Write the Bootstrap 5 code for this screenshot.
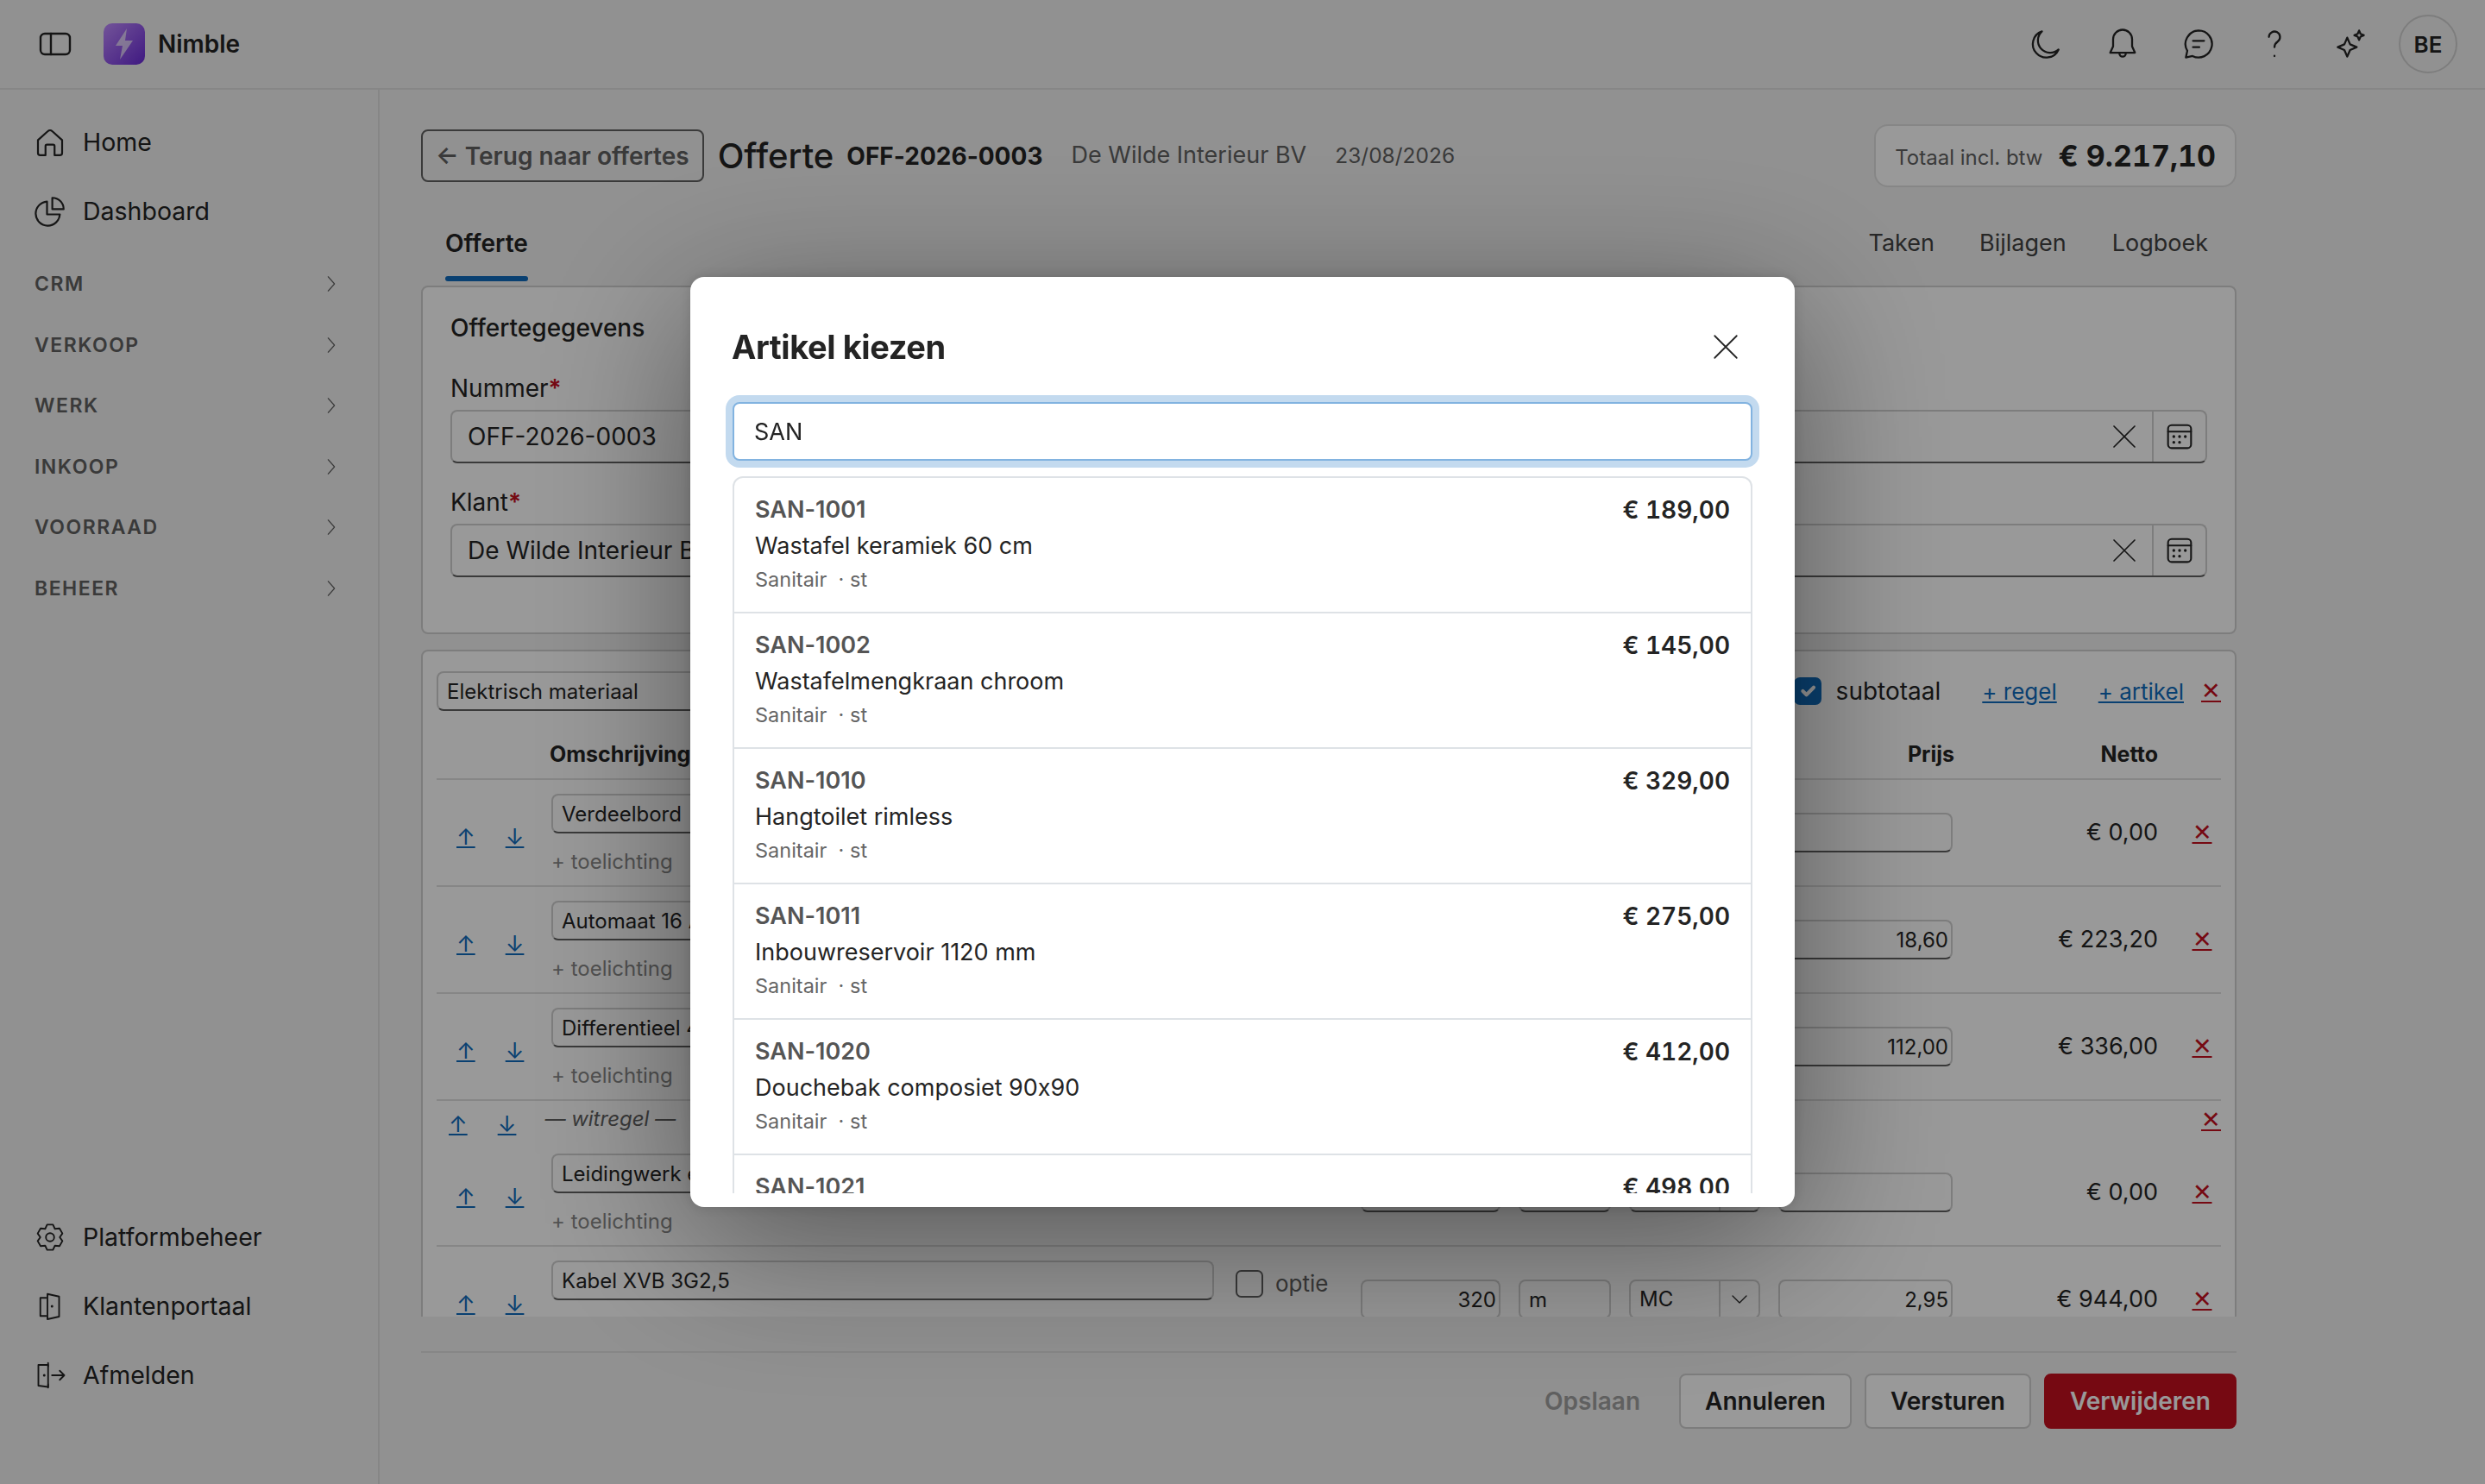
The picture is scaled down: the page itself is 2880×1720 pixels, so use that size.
<!DOCTYPE html>
<html lang="nl">
<head>
  <meta charset="UTF-8" />
  <meta name="viewport" content="width=device-width, initial-scale=1.0"/>
  <title>Nimble - Offerte</title>
  <link href="https://cdn.jsdelivr.net/npm/bootstrap@5.3.3/dist/css/bootstrap.min.css" rel="stylesheet">
  <style>
    :root {
      --ink: #242424;
      --ink-2: #616161;
      --line: #d1d1d1;
      --line-2: #e0e0e0;
      --brand: #0f6cbd;
      --danger-ink: #c50f1f;
    }
    body {
      font-family: Inter, "Liberation Sans", sans-serif;
      font-feature-settings: "calt" 0;
      font-size: 28px;
      color: var(--ink);
      background: #f2f2f2;
      height: 1720px;
      overflow: hidden;
    }
    svg.ico { fill: none; stroke: currentColor; stroke-width: 1.25; stroke-linecap: round; stroke-linejoin: round; flex: none; }

    .topbar { height: 104px; border-bottom: 2px solid var(--line-2); padding: 0 32px 0 45px; }
    .brand-mark { width: 48px; height: 48px; border-radius: 10px; background: linear-gradient(135deg, #c08cff, #6a2ad8); margin-left: 37px; }
    .brand-name { font-weight: 600; font-size: 28px; margin-left: 15px; }
    .top-icon { width: 88px; display: flex; justify-content: center; }
    .avatar { width: 68px; height: 68px; border: 2px solid var(--line); border-radius: 50%; font-weight: 600; font-size: 26px; margin-left: 12px; }

    .app-body { height: 1616px; }
    .side { width: 440px; border-right: 2px solid var(--line-2); padding: 21px 0 86px 0; flex: none; }
    .side-link { height: 80px; padding-left: 37px; gap: 17px; color: var(--ink); font-size: 28.500px; }
    .side-group { height: 70.5px; padding: 0 48px 0 40px; font-size: 23px; font-weight: 600; letter-spacing: 1.5px; color: var(--ink-2); }
    .side-first { margin-top: 9px; }

    .work { padding: 40px 0 0 48px; width: 2152px; }
    .back-btn { height: 61px; border: 2px solid var(--ink-2); border-radius: 8px; padding: 0 15px; font-size: 28px; font-weight: 600; color: var(--ink-2); background: transparent; }
    .doc-title { font-size: 40px; font-weight: 500; margin: 0 15px 0 16px; }
    .doc-num { font-size: 28px; font-weight: 700; margin-right: 33px; }
    .doc-client { font-size: 27px; color: var(--ink-2); margin-right: 33px; }
    .doc-date { font-size: 24.500px; color: var(--ink-2); }
    .total-box { height: 73px; border: 2px solid var(--line-2); border-radius: 16px; background: #fff; padding: 0 22px; gap: 18px; }
    .total-label { font-size: 24px; color: var(--ink-2); padding-top: 4px; }
    .total-val { font-size: 34px; font-weight: 700; font-variant-numeric: tabular-nums; }

    .tabs-row { height: 114px; }
    .tab-on { margin-left: 28px; height: 109px; padding-top: 44px; font-weight: 600; position: relative; }
    .tab-on::after { content: ""; position: absolute; left: 0; right: 0; bottom: 0; height: 6px; border-radius: 3px; background: var(--brand); }
    .tab-off { color: #424242; margin-top: 45px; font-size: 27px; }

    .pane { background: #fff; border: 2px solid var(--line); border-radius: 8px; }
    .pane-head { padding: 32px 32px 64px; height: 404px; }
    .pane-title { font-size: 28px; font-weight: 500; line-height: 30px; margin-bottom: 38px; }
    .lbl { line-height: 34px; margin-bottom: 8px; }
    .lbl b { color: var(--danger-ink); font-weight: 600; }
    .fld { height: 46px; font-size: 24px; color: var(--ink); border: 2px solid var(--line); border-bottom-color: var(--ink-2); border-radius: 8px; padding: 0 10px; background: #fff; box-shadow: none; }
    .fld-big { height: 62px; font-size: 28px; padding: 0 18px; margin-bottom: 28px; }
    .combo { height: 62px; border: 2px solid var(--line); border-bottom-color: var(--ink-2); border-radius: 8px; margin-bottom: 28px; }
    .combo-x { margin-right: 16px; }
    .combo-cal { width: 62px; height: 100%; border-left: 2px solid var(--line); }

    .clip-pane { height: 773px; margin-top: 18px; overflow: hidden; }
    .pane-lines { padding: 22px 16px 0; height: 900px; border-radius: 8px 8px 0 0; }
    .group-top { height: 48px; font-size: 28px; }
    .group-name { width: 860px; }
    .ck { width: 32px; height: 32px; border: 2px solid var(--ink-2); border-radius: 6px; margin: 0; flex: none; }
    .ck:checked { background-color: var(--brand); border-color: var(--brand); }
    .lnk { color: var(--brand); font-size: 26px; }
    .lnk-red { color: var(--danger-ink); font-size: 27px; }
    .regel { display: grid; grid-template-columns: 112px 768px 128px 162px 107px 152px 202px 217px 52px; column-gap: 21px; align-items: center; border-bottom: 2px solid var(--line-2); font-size: 24px; height: 124px; }
    .regel-head { height: 79px; font-size: 25px; font-weight: 700; align-items: end; padding-bottom: 9px; }
    .head-desc { margin-left: -2px; }
    .head-price { margin-right: -2px; }
    .regel-wit { display: flex; height: 45px; border-bottom: 0; font-size: 24px; }
    .arrows { display: flex; gap: 35px; padding-left: 23px; padding-top: 8px; }
    .desc-cell { align-self: start; padding-top: 16px; }
    .desc-cell .hint { color: var(--ink-2); opacity: .75; margin-top: 18px; line-height: 30px; }
    .opt-cell { align-self: start; padding: 23px 0 0 4px; gap: 14px; font-size: 26px; color: var(--ink-2); }
    .num { text-align: right; padding-right: 3px; }
    .netto { text-align: right; font-size: 27px; color: var(--ink); }
    .cross { text-align: center; padding-left: 8px; }
    .sel-box { height: 46px; border: 2px solid var(--line); border-bottom-color: var(--ink-2); border-radius: 8px; }
    .sel-box span { padding-left: 10px; flex: 1; }
    .sel-arrow { width: 46px; height: 100%; border-left: 2px solid var(--line); }
    .witregel-txt { color: var(--ink-2); font-style: italic; margin-left: 12px; margin-top: -3px; width: 1904px; }

    .foot-bar { margin-top: 40px; border-top: 2px solid var(--line-2); padding-top: 24px; gap: 15px; }
    .foot-btn { height: 64px; border: 2px solid var(--line); border-radius: 8px; background: #fff; font-size: 28px; font-weight: 600; color: var(--ink); padding: 0 28px; }
    .foot-ghost { color: #a0a0a0; border-color: transparent; background: transparent; }
    .foot-red { background: #c50f1f; border-color: #c50f1f; color: #fff; }

    .modal-backdrop { --bs-backdrop-opacity: .4; }
    .pick-modal .modal-dialog { max-width: 1280px; }
    .pick-box { height: 1078px; border: 0; border-radius: 16px; box-shadow: 0 0 16px rgba(0,0,0,.15), 0 40px 180px rgba(0,0,0,.45); padding: 0 48px 16px; }
    .pick-head { height: 145px; padding-top: 16px; }
    .pick-title { font-size: 38px; font-weight: 700; color: var(--ink); letter-spacing: -.4px; margin: 0; line-height: 1; }
    .pick-close { margin-right: 15px; color: var(--ink); }
    .pick-search { height: 68px; margin: 0 1px; width: auto; border: 2px solid #82b3e0; border-radius: 8px; box-shadow: 0 0 0 8px #c3daef; font-size: 27px; padding: 1px 23px 0; flex: none; color: var(--ink); }
    .pick-search:focus { border-color: #82b3e0; box-shadow: 0 0 0 8px #c3daef; }
    .pick-scroll { flex: 1; min-height: 0; overflow: hidden; margin: 18px 1px 0; }
    .pick-list { --bs-list-group-border-width: 2px; --bs-list-group-border-color: #dee2e6; --bs-list-group-border-radius: 12px; }
    .pick-item { padding: 17px 24px 20px 24px; line-height: 40px; font-size: 27px; color: var(--ink); }
    .pick-code { font-size: 27px; font-weight: 600; color: #555; }
    .pick-price { font-size: 28px; font-weight: 600; font-variant-numeric: tabular-nums; }
    .pick-name { line-height: 44px; }
    .pick-meta { font-size: 23.500px; line-height: 34px; color: #666; }
  </style>
</head>
<body>

<svg width="0" height="0" class="d-block">
  <symbol id="cal" viewBox="0 0 24 24"><rect x="4" y="4" width="16" height="16" rx="2.500"/><path d="M4 8.500h16"/><path d="M8 12h.01M12 12h.01M16 12h.01M8 16h.01M12 16h.01" stroke-width="2"/></symbol>
  <symbol id="chev" viewBox="0 0 12 24"><path d="M2 3l8 9-8 9"/></symbol>
  <symbol id="ex" viewBox="0 0 24 24"><path d="M3 3l18 18M21 3L3 21"/></symbol>
</svg>

<header class="topbar d-flex align-items-center">
  <svg class="ico" width="38" height="30" viewBox="0 0 38 30" style="stroke-width:2.400"><rect x="2" y="3" width="34" height="24" rx="5"/><path d="M14 3v24"/></svg>
  <span class="brand-mark d-flex align-items-center justify-content-center">
    <svg width="26" height="38" viewBox="0 0 26 38"><path d="M16 1L3 21h8l-3 16 15-22h-9z" fill="#fff" fill-opacity=".65"/></svg>
  </span>
  <span class="brand-name">Nimble</span>
  <div class="ms-auto d-flex align-items-center">
    <span class="top-icon"><svg class="ico" width="44" height="44" viewBox="0 0 24 24"><path d="M19.500 15.500A8.500 8.500 0 1 1 9 4a7.500 7.500 0 0 0 10.500 11.500z"/></svg></span>
    <span class="top-icon"><svg class="ico" width="44" height="44" viewBox="0 0 24 24"><path d="M12 3a6 6 0 0 0-6 6v4.500L4.200 17.500h15.600L18 13.500V9a6 6 0 0 0-6-6z"/><path d="M10 18a2 2 0 0 0 4 0"/></svg></span>
    <span class="top-icon"><svg class="ico" width="44" height="44" viewBox="0 0 24 24"><path d="M12 3.500a8.500 8.500 0 1 1-3.800 16.100L4 20.500l.9-4.200A8.500 8.500 0 0 1 12 3.500z"/><path d="M8.500 10h7M8.500 14h4"/></svg></span>
    <span class="top-icon"><svg class="ico" width="44" height="44" viewBox="0 0 24 24"><path d="M8.500 7.500a3.500 3.500 0 1 1 5.500 3c-1.300.9-2 1.700-2 3.500M12 19.500v.2"/></svg></span>
    <span class="top-icon"><svg class="ico" width="44" height="44" viewBox="0 0 24 24"><path d="M10 8l1.800 4.200L16 14l-4.200 1.800L10 20l-1.800-4.200L4 14l4.200-1.800z"/><path d="M17.500 3.500l.9 2.100 2.100.9-2.100.9-.9 2.100-.9-2.100-2.100-.9 2.100-.9z"/></svg></span>
    <span class="avatar d-flex align-items-center justify-content-center">BE</span>
  </div>
</header>

<div class="app-body d-flex">
  <aside class="side d-flex flex-column">
    <a class="side-link d-flex align-items-center text-decoration-none" href="#"><svg class="ico" width="42" height="42" viewBox="0 0 24 24"><path d="M4 10.500 10.600 4.600a2 2 0 0 1 2.800 0L20 10.500V19a1.500 1.500 0 0 1-1.500 1.500H15v-6a1 1 0 0 0-1-1h-4a1 1 0 0 0-1 1v6H5.500A1.500 1.500 0 0 1 4 19z"/></svg>Home</a>
    <a class="side-link d-flex align-items-center text-decoration-none" href="#"><svg class="ico" width="42" height="42" viewBox="0 0 24 24"><path d="M10 5.500a8 8 0 1 0 8.500 8.500H10z"/><path d="M13.500 3a7.500 7.500 0 0 1 7.500 7.500h-7.500z"/></svg>Dashboard</a>
    <div class="side-group side-first d-flex align-items-center justify-content-between">CRM<svg class="ico" width="12" height="22"><use href="#chev"/></svg></div>
    <div class="side-group d-flex align-items-center justify-content-between">VERKOOP<svg class="ico" width="12" height="22"><use href="#chev"/></svg></div>
    <div class="side-group d-flex align-items-center justify-content-between">WERK<svg class="ico" width="12" height="22"><use href="#chev"/></svg></div>
    <div class="side-group d-flex align-items-center justify-content-between">INKOOP<svg class="ico" width="12" height="22"><use href="#chev"/></svg></div>
    <div class="side-group d-flex align-items-center justify-content-between">VOORRAAD<svg class="ico" width="12" height="22"><use href="#chev"/></svg></div>
    <div class="side-group d-flex align-items-center justify-content-between">BEHEER<svg class="ico" width="12" height="22"><use href="#chev"/></svg></div>
    <a class="side-link d-flex align-items-center text-decoration-none mt-auto" href="#"><svg class="ico" width="42" height="42" viewBox="0 0 28 28"><g transform="translate(2 2)"><path d="M9.750 2.260h4.500L15.750 5.500 19.310 5.180 21.560 9.080 19.500 12l2.060 2.920-2.250 3.900-3.560-.32-1.500 3.240h-4.500L8.250 18.500l-3.560.32-2.250-3.900L4.500 12 2.440 9.080l2.250-3.900 3.560.32z"/><circle cx="12" cy="12" r="3.200"/></g></svg>Platformbeheer</a>
    <a class="side-link d-flex align-items-center text-decoration-none" href="#"><svg class="ico" width="42" height="42" viewBox="0 0 28 28"><g transform="translate(2 2)"><path d="M9 5.500H4.500v14H9"/><path d="M10 2.500l9 2v15.500l-9 2z"/><path d="M13.500 12h.01" stroke-width="2"/></g></svg>Klantenportaal</a>
    <a class="side-link d-flex align-items-center text-decoration-none" href="#"><svg class="ico" width="42" height="42" viewBox="0 0 28 28"><g transform="translate(2 2)"><path d="M10.500 4H3v16l7.500 1z"/><path d="M10.500 2.500V5M10.500 19v2.500"/><path d="M13.500 12H23M19.500 8.500 23 12l-3.500 3.500"/><path d="M7.500 12h.01" stroke-width="2"/></g></svg>Afmelden</a>
  </aside>

  <main class="work d-flex flex-column">
    <div class="d-flex align-items-center">
      <button class="back-btn">← Terug naar offertes</button>
      <h1 class="doc-title mb-0">Offerte</h1>
      <span class="doc-num">OFF-2026-0003</span>
      <span class="doc-client">De Wilde Interieur BV</span>
      <span class="doc-date">23/08/2026</span>
      <div class="total-box d-flex align-items-center ms-auto">
        <span class="total-label">Totaal incl. btw</span>
        <span class="total-val">€ 9.217,10</span>
      </div>
    </div>

    <div class="tabs-row d-flex align-items-start">
      <div class="tab-on">Offerte</div>
      <div class="tab-off ms-auto">Taken</div>
      <div class="tab-off" style="margin-left:52px">Bijlagen</div>
      <div class="tab-off" style="margin-left:53px;margin-right:33px">Logboek</div>
    </div>

    <section class="pane pane-head">
      <div class="pane-title">Offertegegevens</div>
      <div class="row g-4">
        <div class="col-6">
          <div class="lbl">Nummer<b>*</b></div>
          <input class="form-control fld fld-big" value="OFF-2026-0003">
          <div class="lbl">Klant<b>*</b></div>
          <input class="form-control fld fld-big" value="De Wilde Interieur BV">
        </div>
        <div class="col-6">
          <div class="lbl">Datum</div>
          <div class="combo d-flex align-items-center justify-content-end">
            <svg class="ico combo-x" width="32" height="32"><use href="#ex"/></svg>
            <span class="combo-cal d-flex align-items-center justify-content-center"><svg class="ico" width="40" height="40"><use href="#cal"/></svg></span>
          </div>
          <div class="lbl">Vervaldatum</div>
          <div class="combo d-flex align-items-center justify-content-end">
            <svg class="ico combo-x" width="32" height="32"><use href="#ex"/></svg>
            <span class="combo-cal d-flex align-items-center justify-content-center"><svg class="ico" width="40" height="40"><use href="#cal"/></svg></span>
          </div>
        </div>
      </div>
    </section>

    <div class="clip-pane">
      <section class="pane pane-lines">
        <div class="group-top d-flex align-items-center">
          <input class="form-control fld group-name" value="Elektrisch materiaal">
          <div class="ms-auto d-flex align-items-center">
            <input class="form-check-input ck" type="checkbox" checked>
            <span style="margin:0 48px 0 17px">subtotaal</span>
            <a class="lnk" href="#" style="margin-right:48px">+ regel</a>
            <a class="lnk" href="#" style="margin-right:20px">+ artikel</a>
            <a class="lnk-red" href="#">✕</a>
          </div>
        </div>
        <div class="regel regel-head">
          <span></span><span class="head-desc">Omschrijving</span><span></span><span class="text-end">Aantal</span><span>Eenheid</span><span>Btw</span><span class="text-end head-price">Prijs</span><span class="text-end">Netto</span><span></span>
        </div>
        <div class="regel">
          <div class="arrows"><a class="lnk" href="#">↑</a><a class="lnk" href="#">↓</a></div>
          <div class="desc-cell"><input class="form-control fld" value="Verdeelbord"><div class="hint">+ toelichting</div></div>
          <label class="opt-cell d-flex align-items-center"><input class="form-check-input ck" type="checkbox"><span>optie</span></label>
          <input class="form-control fld num" value="1"><input class="form-control fld" value="st">
          <div class="sel-box d-flex align-items-center"><span>MC</span><div class="sel-arrow d-flex align-items-center justify-content-center"><svg class="ico" width="20" height="12" viewBox="0 0 20 12"><path d="M2 2l8 8 8-8"/></svg></div></div>
          <input class="form-control fld num" value=""><div class="netto">€ 0,00</div><div class="cross"><a class="lnk-red" href="#">✕</a></div>
        </div>
        <div class="regel">
          <div class="arrows"><a class="lnk" href="#">↑</a><a class="lnk" href="#">↓</a></div>
          <div class="desc-cell"><input class="form-control fld" value="Automaat 16 A"><div class="hint">+ toelichting</div></div>
          <label class="opt-cell d-flex align-items-center"><input class="form-check-input ck" type="checkbox"><span>optie</span></label>
          <input class="form-control fld num" value="12"><input class="form-control fld" value="st">
          <div class="sel-box d-flex align-items-center"><span>MC</span><div class="sel-arrow d-flex align-items-center justify-content-center"><svg class="ico" width="20" height="12" viewBox="0 0 20 12"><path d="M2 2l8 8 8-8"/></svg></div></div>
          <input class="form-control fld num" value="18,60"><div class="netto">€ 223,20</div><div class="cross"><a class="lnk-red" href="#">✕</a></div>
        </div>
        <div class="regel">
          <div class="arrows"><a class="lnk" href="#">↑</a><a class="lnk" href="#">↓</a></div>
          <div class="desc-cell"><input class="form-control fld" value="Differentieel 40 A"><div class="hint">+ toelichting</div></div>
          <label class="opt-cell d-flex align-items-center"><input class="form-check-input ck" type="checkbox"><span>optie</span></label>
          <input class="form-control fld num" value="3"><input class="form-control fld" value="st">
          <div class="sel-box d-flex align-items-center"><span>MC</span><div class="sel-arrow d-flex align-items-center justify-content-center"><svg class="ico" width="20" height="12" viewBox="0 0 20 12"><path d="M2 2l8 8 8-8"/></svg></div></div>
          <input class="form-control fld num" value="112,00"><div class="netto">€ 336,00</div><div class="cross"><a class="lnk-red" href="#">✕</a></div>
        </div>
        <div class="regel regel-wit">
          <div class="arrows" style="padding-left:14px"><a class="lnk" href="#">↑</a><a class="lnk" href="#">↓</a></div>
          <div class="witregel-txt">— witregel —</div>
          <a class="lnk-red" href="#">✕</a>
        </div>
        <div class="regel">
          <div class="arrows"><a class="lnk" href="#">↑</a><a class="lnk" href="#">↓</a></div>
          <div class="desc-cell"><input class="form-control fld" value="Leidingwerk en montage"><div class="hint">+ toelichting</div></div>
          <label class="opt-cell d-flex align-items-center"><input class="form-check-input ck" type="checkbox"><span>optie</span></label>
          <input class="form-control fld num" value="1"><input class="form-control fld" value="st">
          <div class="sel-box d-flex align-items-center"><span>MC</span><div class="sel-arrow d-flex align-items-center justify-content-center"><svg class="ico" width="20" height="12" viewBox="0 0 20 12"><path d="M2 2l8 8 8-8"/></svg></div></div>
          <input class="form-control fld num" value=""><div class="netto">€ 0,00</div><div class="cross"><a class="lnk-red" href="#">✕</a></div>
        </div>
        <div class="regel">
          <div class="arrows"><a class="lnk" href="#">↑</a><a class="lnk" href="#">↓</a></div>
          <div class="desc-cell"><input class="form-control fld" value="Kabel XVB 3G2,5"><div class="hint">+ toelichting</div></div>
          <label class="opt-cell d-flex align-items-center"><input class="form-check-input ck" type="checkbox"><span>optie</span></label>
          <input class="form-control fld num" value="320"><input class="form-control fld" value="m">
          <div class="sel-box d-flex align-items-center"><span>MC</span><div class="sel-arrow d-flex align-items-center justify-content-center"><svg class="ico" width="20" height="12" viewBox="0 0 20 12"><path d="M2 2l8 8 8-8"/></svg></div></div>
          <input class="form-control fld num" value="2,95"><div class="netto">€ 944,00</div><div class="cross"><a class="lnk-red" href="#">✕</a></div>
        </div>
      </section>
    </div>

    <div class="foot-bar d-flex justify-content-end">
      <button class="foot-btn foot-ghost">Opslaan</button>
      <button class="foot-btn">Annuleren</button>
      <button class="foot-btn">Versturen</button>
      <button class="foot-btn foot-red">Verwijderen</button>
    </div>
  </main>
</div>

<!-- Modal -->
<div class="modal-backdrop fade show"></div>
<div class="modal fade show d-block pick-modal" tabindex="-1">
  <div class="modal-dialog modal-dialog-centered">
    <div class="modal-content pick-box">
      <div class="pick-head d-flex align-items-center justify-content-between">
        <h5 class="pick-title">Artikel kiezen</h5>
        <span class="pick-close d-flex"><svg class="ico" width="34" height="34"><use href="#ex"/></svg></span>
      </div>
      <input class="form-control pick-search" value="SAN">
      <div class="pick-scroll">
        <div class="list-group pick-list">
          <a href="#" class="list-group-item pick-item text-decoration-none"><div class="d-flex justify-content-between"><span class="pick-code">SAN-1001</span><span class="pick-price">€ 189,00</span></div><div class="pick-name">Wastafel keramiek 60 cm</div><div class="pick-meta">Sanitair &nbsp;· st</div></a>
          <a href="#" class="list-group-item pick-item text-decoration-none"><div class="d-flex justify-content-between"><span class="pick-code">SAN-1002</span><span class="pick-price">€ 145,00</span></div><div class="pick-name">Wastafelmengkraan chroom</div><div class="pick-meta">Sanitair &nbsp;· st</div></a>
          <a href="#" class="list-group-item pick-item text-decoration-none"><div class="d-flex justify-content-between"><span class="pick-code">SAN-1010</span><span class="pick-price">€ 329,00</span></div><div class="pick-name">Hangtoilet rimless</div><div class="pick-meta">Sanitair &nbsp;· st</div></a>
          <a href="#" class="list-group-item pick-item text-decoration-none"><div class="d-flex justify-content-between"><span class="pick-code">SAN-1011</span><span class="pick-price">€ 275,00</span></div><div class="pick-name">Inbouwreservoir 1120 mm</div><div class="pick-meta">Sanitair &nbsp;· st</div></a>
          <a href="#" class="list-group-item pick-item text-decoration-none"><div class="d-flex justify-content-between"><span class="pick-code">SAN-1020</span><span class="pick-price">€ 412,00</span></div><div class="pick-name">Douchebak composiet 90x90</div><div class="pick-meta">Sanitair &nbsp;· st</div></a>
          <a href="#" class="list-group-item pick-item text-decoration-none"><div class="d-flex justify-content-between"><span class="pick-code">SAN-1021</span><span class="pick-price">€ 498,00</span></div><div class="pick-name">Douchewand glas 90 cm</div><div class="pick-meta">Sanitair &nbsp;· st</div></a>
        </div>
      </div>
    </div>
  </div>
</div>

<script src="https://cdn.jsdelivr.net/npm/bootstrap@5.3.3/dist/js/bootstrap.bundle.min.js"></script>
</body>
</html>
